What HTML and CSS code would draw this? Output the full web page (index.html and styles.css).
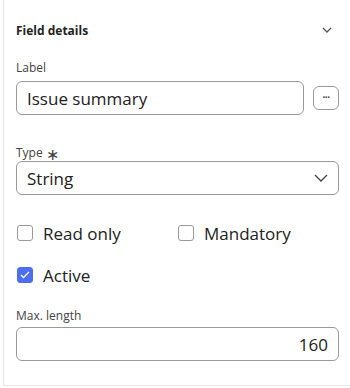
FILE: index.html
```html
<!DOCTYPE html>
<html lang="en">
<head>
  <meta charset="UTF-8" />
  <title>Field details</title>
  <link rel="stylesheet" href="styles.css">
</head>
<body>
  <div class="panel">
    <div class="panel-head">
      <h3>Field details</h3>
      <svg class="chev-sm" width="10" height="6" viewBox="0 0 10 6"><path d="M1 1l4 4 4-4" fill="none" stroke="#555" stroke-width="1.3"/></svg>
    </div>

    <label class="lbl">Label</label>
    <div class="row">
      <div class="field grow">Issue summary</div>
      <button class="more">&middot;&middot;&middot;</button>
    </div>

    <label class="lbl lbl-type">Type <span class="req">&lowast;</span></label>
    <div class="field select">
      <span>String</span>
      <svg width="14" height="8" viewBox="0 0 14 8"><path d="M1 1l6 6 6-6" fill="none" stroke="#444" stroke-width="1.3"/></svg>
    </div>

    <div class="checks">
      <div class="check"><span class="box"></span>Read only</div>
      <div class="check"><span class="box"></span>Mandatory</div>
    </div>
    <div class="checks">
      <div class="check"><span class="box on"><svg width="10" height="8" viewBox="0 0 10 8"><path d="M1 4l2.5 2.5L9 1" fill="none" stroke="#fff" stroke-width="1.4"/></svg></span>Active</div>
    </div>

    <label class="lbl lbl-max">Max. length</label>
    <div class="field num">160</div>
  </div>
</body>
</html>
```

FILE: styles.css
```css
body { margin: 0; background: #fff; font-family: "Open Sans", "Noto Sans", sans-serif; color: #222; }
.panel { margin-left: 3px; height: 386px; border-left: 1px solid #e6e6e6; border-bottom: 1px solid #e6e6e6; padding: 0 11px 0 12px; box-sizing: border-box; }
.panel-head { display: flex; justify-content: space-between; align-items: center; height: 60px; padding-right: 7px; }
.panel-head h3 { margin: 0; font-size: 12px; font-weight: 700; color: #222; }
.lbl { display: block; font-size: 12px; color: #444; margin-bottom: 5px; line-height: 16px; }
.lbl-type { margin-top: 30px; margin-bottom: 0; }
.req { font-size: 16px; vertical-align: -3px; line-height: 10px; }
.row { display: flex; align-items: center; gap: 9px; }
.grow { flex: 1; }
.field { height: 34px; box-sizing: border-box; border: 1px solid #9a9a9a; border-radius: 6px; padding: 0 10px; font-size: 17px; display: flex; align-items: center; }
.more { width: 26px; height: 24px; border: 1px solid #9a9a9a; border-radius: 6px; background: #fff; font-size: 10px; line-height: 1; padding: 0; color: #444; font-weight: 700; letter-spacing: -1px; }
.select { justify-content: space-between; }
.checks { display: flex; margin-top: 27px; height: 22px; align-items: center; }
.check { display: flex; align-items: center; font-size: 17px; width: 161px; }
.box { width: 16px; height: 16px; border: 1px solid #9a9a9a; border-radius: 3px; box-sizing: border-box; margin: 0 10px 0 1px; display: flex; align-items: center; justify-content: center; }
.box.on { background: #4c6ef0; border-color: #4c6ef0; }
.checks + .checks { margin-top: 20px; }
.lbl-max { margin-top: 22px; margin-bottom: 3px; }
.num { justify-content: flex-end; }
```
